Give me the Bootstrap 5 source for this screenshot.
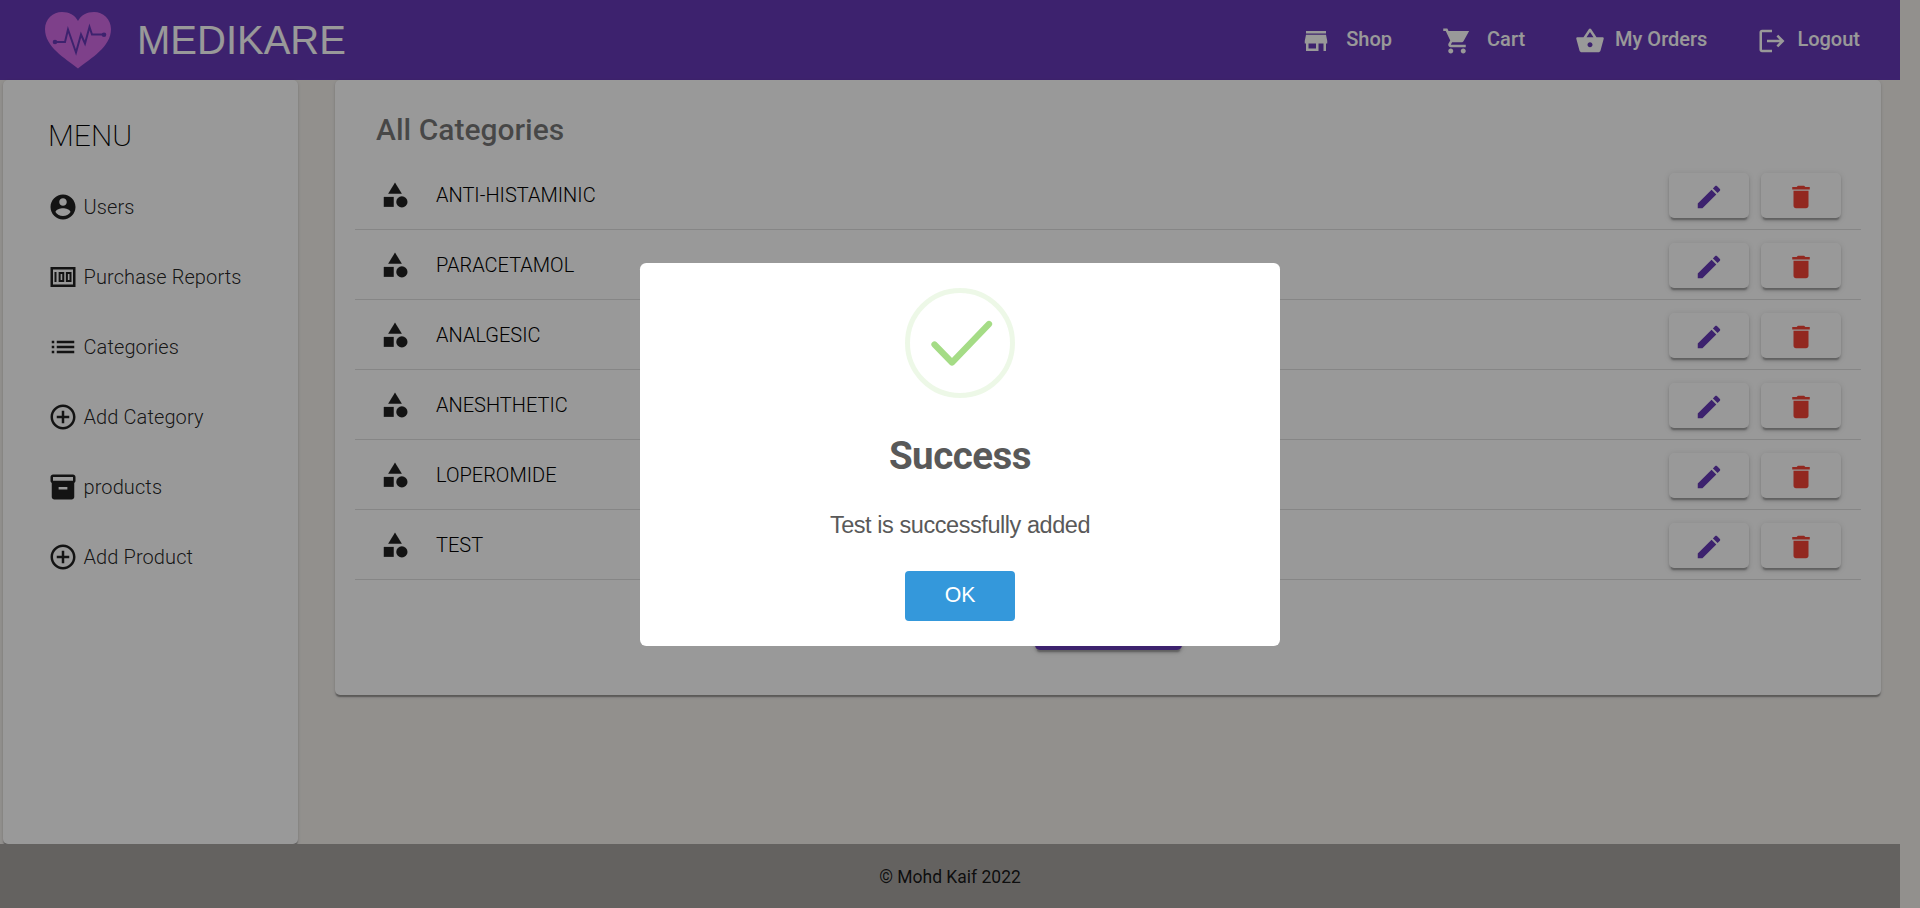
<!DOCTYPE html>
<html lang="en">
<head>
<meta charset="utf-8">
<meta name="viewport" content="width=device-width, initial-scale=1">
<title>Medikare</title>
<link href="https://cdn.jsdelivr.net/npm/bootstrap@5.3.0/dist/css/bootstrap.min.css" rel="stylesheet">
<style>
  html { background: #f3f0ec; }
  body { font-family: Roboto, "Liberation Sans", sans-serif; font-size: 20px; font-weight: 300; line-height: 30px; color: rgba(0,0,0,.87); background: #f3f0ec; overflow: hidden; }
  .page { width: 1900px; height: 908px; }
  .topbar { height: 80px; background: #673ab7; color: #fff; padding: 0 40px 0 45px; flex: none; }
  .brand { font-family: "Liberation Sans", Arial, sans-serif; font-size: 40px; font-weight: 400; line-height: 48px; margin-left: 26px; padding-bottom: 1px; }
  .topbar a { color: #fff; font-weight: 500; line-height: 30px; height: 32px; gap: 10px; }
  .topbar a .ico { margin-top: 2px; }
  .topbar a.wide { gap: 15px; }
  .toplinks { gap: 50px; }
  .ico { width: 30px; height: 30px; fill: currentColor; flex: none; display: block; }
  .panel { background: #fff; border-radius: 5px; box-shadow: 0 2.5px 1.25px -1.25px rgba(0,0,0,.2), 0 1.25px 1.25px rgba(0,0,0,.14), 0 1.25px 3.75px rgba(0,0,0,.12); }
  .side { width: 295px; margin-left: 3px; padding: 36px 0 0 45px; }
  .side h1 { font-size: 30px; font-weight: 200; line-height: 40px; margin: 0 0 16px 0; color: #000; }
  .side a { height: 70px; color: inherit; gap: 5.5px; letter-spacing: .1px; }
  .side a span { padding-bottom: 1px; }
  .main { width: 1546px; height: 615px; margin-left: 37px; padding: 30px 20px 0; }
  .main h2 { font-size: 30px; font-weight: 500; line-height: 40px; margin: 0 0 10px 21px; color: rgba(0,0,0,.54); }
  .entry { height: 70px; border-bottom: 1px solid rgba(0,0,0,.12); padding: 1px 20px 0 25px; }
  .entry .label { margin-left: 26px; color: #000; }
  .pair { gap: 12px; padding-top: 1px; }
  .raised { width: 80px; height: 45px; background: #fff; border: 0; border-radius: 5px; box-shadow: 0 3.75px 1.25px -2.5px rgba(0,0,0,.2), 0 2.5px 2.5px rgba(0,0,0,.14), 0 1.25px 6.25px rgba(0,0,0,.12); padding: 2px 0 0; }
  .raised .ico { margin: auto; }
  .edit { color: #673ab7; }
  .del { color: #f44336; }
  .addbtn { width: 147px; background: #673ab7; margin: 25px 0 0 680px; }
  .foot { height: 64px; background: #a7a4a0; font-weight: 400; font-size: 17.5px; padding-top: 2px; }
  .shade { background: rgba(0,0,0,.4); z-index: 1050; }
  .dialog-box { width: 640px; height: 383px; background: #fff; border-radius: 6.25px; padding-top: 25px; color: #595959; margin-top: 1px; }
  .dialog-box h3 { font-size: 38.5px; font-weight: 700; line-height: 45px; letter-spacing: -.5px; margin: 35px 0 0; }
  .dialog-box p { font-family: "Liberation Sans", Arial, sans-serif; font-size: 23.5px; font-weight: 400; line-height: 27px; letter-spacing: -.44px; margin: 34px 0 0; }
  .okbtn { width: 110px; height: 50px; background: #3498db; border: 0; border-radius: 4px; color: #fff; font-family: "Liberation Sans", Arial, sans-serif; font-size: 21.25px; font-weight: 400; padding: 0 0 2px; margin-top: 32px; }
</style>
</head>
<body>
<svg class="d-none">
  <symbol id="cat" viewBox="0 0 24 24"><path d="M12 2l-5.500 9h11z"/><circle cx="17.500" cy="17.500" r="4.500"/><path d="M3 13.500h8v8H3z"/></symbol>
  <symbol id="pen" viewBox="0 0 24 24"><path d="M3 17.250V21h3.750L17.810 9.940l-3.750-3.750L3 17.250zM20.710 7.040c.39-.39.39-1.020 0-1.410l-2.340-2.340c-.39-.39-1.020-.39-1.410 0l-1.830 1.830 3.750 3.750 1.830-1.830z"/></symbol>
  <symbol id="bin" viewBox="0 0 24 24"><path d="M6 19c0 1.100.9 2 2 2h8c1.100 0 2-.9 2-2V7H6v12zM19 4h-3.500l-1-1h-5l-1 1H5v2h14V4z"/></symbol>
  <symbol id="plus" viewBox="0 0 24 24"><path d="M13 7h-2v4H7v2h4v4h2v-4h4v-2h-4V7zm-1-5C6.480 2 2 6.480 2 12s4.480 10 10 10 10-4.480 10-10S17.520 2 12 2zm0 18c-4.410 0-8-3.590-8-8s3.590-8 8-8 8 3.590 8 8-3.590 8-8 8z"/></symbol>
</svg>
<div class="page d-flex flex-column">
  <nav class="topbar d-flex align-items-center">
    <svg width="66" height="57" viewBox="0 0 66 57"><path d="M33 56.500C20 46 0 35 0 17C0 7 8 0 17 0c7 0 13 3 16 9C36 3 42 0 49 0c9 0 17 7 17 17C66 35 46 46 33 56.500z" fill="#d26be6"/><path d="M10 30h10l3-12.500 8 23 5-18 4 9 4.500-16.500 2.500 7.500h12" fill="none" stroke="#673ab7" stroke-width="2"/><circle cx="10" cy="30" r="2.300" fill="#673ab7"/><circle cx="59" cy="22.700" r="2.300" fill="#673ab7"/></svg>
    <span class="brand">MEDIKARE</span>
    <div class="toplinks d-flex align-items-center ms-auto">
      <a class="wide d-flex text-decoration-none" href="#"><svg class="ico" viewBox="0 0 24 24"><path d="M20 4H4v2h16V4zm1 10v-2l-1-5H4l-1 5v2h1v6h10v-6h4v6h2v-6h1zm-9 4H6v-4h6v4z"/></svg>Shop</a>
      <a class="wide d-flex text-decoration-none" href="#"><svg class="ico" viewBox="0 0 24 24"><path d="M7 18c-1.100 0-1.990.9-1.990 2S5.900 22 7 22s2-.9 2-2-.9-2-2-2zM1 2v2h2l3.600 7.590-1.350 2.450c-.16.28-.25.61-.25.96 0 1.100.9 2 2 2h12v-2H7.420c-.14 0-.25-.11-.25-.25l.03-.12.9-1.630h7.450c.75 0 1.410-.41 1.750-1.030L21.700 4H5.210l-.94-2H1zm16 16c-1.100 0-1.990.9-1.990 2s.89 2 1.990 2 2-.9 2-2-.9-2-2-2z"/></svg>Cart</a>
      <a class="d-flex text-decoration-none" href="#"><svg class="ico" viewBox="0 0 24 24"><path d="M22 9h-4.790l-4.380-6.560c-.19-.28-.51-.42-.83-.42s-.64.140-.83.430L6.790 9H2c-.55 0-1 .45-1 1 0 .09.010.18.040.270l2.540 9.270c.23.840 1 1.460 1.920 1.460h13c.92 0 1.690-.62 1.930-1.460l2.540-9.270L23 10c0-.55-.45-1-1-1zM12 4.800L14.800 9H9.200L12 4.800zM12 17c-1.100 0-2-.9-2-2s.9-2 2-2 2 .9 2 2-.9 2-2 2z"/></svg>My Orders</a>
      <a class="d-flex text-decoration-none" href="#"><svg class="ico" viewBox="0 0 24 24"><path d="M17 7l-1.410 1.410L18.170 11H8v2h10.170l-2.580 2.580L17 17l5-5zM4 5h8V3H4c-1.100 0-2 .9-2 2v14c0 1.100.9 2 2 2h8v-2H4V5z"/></svg>Logout</a>
    </div>
  </nav>
  <div class="d-flex align-items-start flex-grow-1">
    <aside class="side panel d-flex flex-column align-self-stretch">
      <h1>MENU</h1>
      <a class="d-flex align-items-center text-decoration-none" href="#"><svg class="ico" viewBox="0 0 24 24"><path d="M12 2C6.480 2 2 6.480 2 12s4.480 10 10 10 10-4.480 10-10S17.520 2 12 2zm0 3c1.660 0 3 1.340 3 3s-1.340 3-3 3-3-1.340-3-3 1.340-3 3-3zm0 14.200c-2.500 0-4.710-1.280-6-3.220.03-1.990 4-3.080 6-3.080 1.990 0 5.970 1.090 6 3.080-1.290 1.940-3.500 3.220-6 3.220z"/></svg><span>Users</span></a>
      <a class="d-flex align-items-center text-decoration-none" href="#"><svg class="ico" viewBox="0 0 24 24"><path fill-rule="evenodd" d="M2 4h20v16H2zm2 2v12h16V6zM5.200 8h1.600v8H5.200zm3.300 0h4.500v8H8.500zm1.600 1.600v4.800h1.300V9.600zM14.300 8h4.500v8h-4.500zm1.600 1.600v4.800h1.300V9.600z"/></svg><span>Purchase Reports</span></a>
      <a class="d-flex align-items-center text-decoration-none" href="#"><svg class="ico" viewBox="0 0 24 24"><path d="M3 13h2v-2H3v2zm0 4h2v-2H3v2zm0-8h2V7H3v2zm4 4h14v-2H7v2zm0 4h14v-2H7v2zM7 7v2h14V7H7z"/></svg><span>Categories</span></a>
      <a class="d-flex align-items-center text-decoration-none" href="#"><svg class="ico"><use href="#plus"/></svg><span>Add Category</span></a>
      <a class="d-flex align-items-center text-decoration-none" href="#"><svg class="ico" viewBox="0 0 24 24"><path fill-rule="evenodd" d="M20 2H4c-1 0-2 .9-2 2v3.010c0 .72.430 1.340 1 1.690V20c0 1.100 1.100 2 2 2h14c.9 0 2-.9 2-2V8.700c.57-.35 1-.97 1-1.690V4c0-1.100-1-2-2-2zm-4.500 12h-7v-2h7v2zm4.500-7H4V4h16v3z"/></svg><span>products</span></a>
      <a class="d-flex align-items-center text-decoration-none" href="#"><svg class="ico"><use href="#plus"/></svg><span>Add Product</span></a>
    </aside>
    <main class="main panel">
      <h2>All Categories</h2>
      <div class="entry d-flex align-items-center"><svg class="ico"><use href="#cat"/></svg><span class="label">ANTI-HISTAMINIC</span><div class="pair d-flex ms-auto"><button class="raised edit"><svg class="ico"><use href="#pen"/></svg></button><button class="raised del"><svg class="ico"><use href="#bin"/></svg></button></div></div>
      <div class="entry d-flex align-items-center"><svg class="ico"><use href="#cat"/></svg><span class="label">PARACETAMOL</span><div class="pair d-flex ms-auto"><button class="raised edit"><svg class="ico"><use href="#pen"/></svg></button><button class="raised del"><svg class="ico"><use href="#bin"/></svg></button></div></div>
      <div class="entry d-flex align-items-center"><svg class="ico"><use href="#cat"/></svg><span class="label">ANALGESIC</span><div class="pair d-flex ms-auto"><button class="raised edit"><svg class="ico"><use href="#pen"/></svg></button><button class="raised del"><svg class="ico"><use href="#bin"/></svg></button></div></div>
      <div class="entry d-flex align-items-center"><svg class="ico"><use href="#cat"/></svg><span class="label">ANESHTHETIC</span><div class="pair d-flex ms-auto"><button class="raised edit"><svg class="ico"><use href="#pen"/></svg></button><button class="raised del"><svg class="ico"><use href="#bin"/></svg></button></div></div>
      <div class="entry d-flex align-items-center"><svg class="ico"><use href="#cat"/></svg><span class="label">LOPEROMIDE</span><div class="pair d-flex ms-auto"><button class="raised edit"><svg class="ico"><use href="#pen"/></svg></button><button class="raised del"><svg class="ico"><use href="#bin"/></svg></button></div></div>
      <div class="entry d-flex align-items-center"><svg class="ico"><use href="#cat"/></svg><span class="label">TEST</span><div class="pair d-flex ms-auto"><button class="raised edit"><svg class="ico"><use href="#pen"/></svg></button><button class="raised del"><svg class="ico"><use href="#bin"/></svg></button></div></div>
      <button class="raised addbtn d-block"></button>
    </main>
  </div>
  <footer class="foot d-flex align-items-center justify-content-center flex-shrink-0">© Mohd Kaif 2022</footer>
</div>
<div class="shade position-fixed top-0 start-0 w-100 h-100 d-flex align-items-center justify-content-center">
  <div class="dialog-box d-flex flex-column align-items-center" role="dialog">
    <svg class="d-block" width="110" height="110" viewBox="0 0 110 110"><circle cx="55" cy="55" r="52.500" fill="none" stroke="#a5dc86" stroke-opacity=".2" stroke-width="5"/><path d="M29.500 56.500L47 74.500L84 36" fill="none" stroke="#a5dc86" stroke-width="6.250" stroke-linecap="round" stroke-linejoin="round"/></svg>
    <h3>Success</h3>
    <p>Test is successfully added</p>
    <button class="okbtn">OK</button>
  </div>
</div>
<script src="https://cdn.jsdelivr.net/npm/bootstrap@5.3.0/dist/js/bootstrap.bundle.min.js"></script>
</body>
</html>
